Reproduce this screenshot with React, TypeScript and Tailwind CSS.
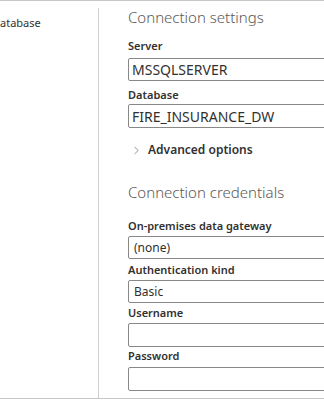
import React from "react";
import { ChevronRight } from "lucide-react";

const font = { fontFamily: '"Noto Sans", "Open Sans", sans-serif' };

function Label({ children, mt }: { children: React.ReactNode; mt: string }) {
  return (
    <div className={`${mt} h-[16px] leading-[16px] text-[11px] font-semibold text-[#323130] whitespace-nowrap`}>
      {children}
    </div>
  );
}

function Box({ children, mt, h, text, pl }: { children?: React.ReactNode; mt: string; h: string; text: string; pl: string }) {
  return (
    <div
      className={`${mt} ${h} ${pl} ${text} w-[230px] border border-[#8a8886] rounded-[2px] flex items-center text-[#323130] bg-white whitespace-nowrap`}
    >
      {children}
    </div>
  );
}

export default function App() {
  return (
    <div style={font} className="w-[324px] h-[399px] overflow-hidden bg-white border-t border-b border-[#c8c6c4] flex">
      <div className="w-[98px] shrink-0 pt-[13px]">
        <div className="ml-[-8px] text-[11px] leading-[18px] text-[#323130]">Database</div>
      </div>
      <div className="mt-[7px] border-l border-[#d2d0ce]" />
      <div className="flex flex-col pl-[29px]">
        <div className="mt-[3px] h-[26px] leading-[26px] text-[15px] font-light text-[#5a5856] whitespace-nowrap">
          Connection settings
        </div>
        <Label mt="mt-[8px]">Server</Label>
        <Box mt="mt-[4px]" h="h-[23px]" text="text-[14px]" pl="pl-[3px]">MSSQLSERVER</Box>
        <Label mt="mt-[6px]">Database</Label>
        <Box mt="mt-[1px]" h="h-[24px]" text="text-[14px]" pl="pl-[3px]">FIRE_INSURANCE_DW</Box>
        <div className="mt-[13px] h-[18px] flex items-center whitespace-nowrap">
          <ChevronRight size={13} strokeWidth={1.25} className="ml-[2px] text-[#605e5c]" />
          <span className="ml-[5px] text-[12px] font-semibold text-[#323130]">Advanced options</span>
        </div>
        <div className="mt-[20px] h-[26px] leading-[26px] text-[15px] font-light text-[#5a5856] whitespace-nowrap">
          Connection credentials
        </div>
        <Label mt="mt-[13px]">On-premises data gateway</Label>
        <Box mt="mt-[2px]" h="h-[23px]" text="text-[12px]" pl="pl-[5px]">(none)</Box>
        <Label mt="mt-[3px]">Authentication kind</Label>
        <Box mt="mt-[2px]" h="h-[23px]" text="text-[12px]" pl="pl-[5px]">Basic</Box>
        <Label mt="mt-[2px]">Username</Label>
        <Box mt="mt-[2px]" h="h-[24px]" text="text-[12px]" pl="pl-[5px]" />
        <Label mt="mt-[1px]">Password</Label>
        <Box mt="mt-[3px]" h="h-[24px]" text="text-[12px]" pl="pl-[5px]" />
      </div>
    </div>
  );
}
